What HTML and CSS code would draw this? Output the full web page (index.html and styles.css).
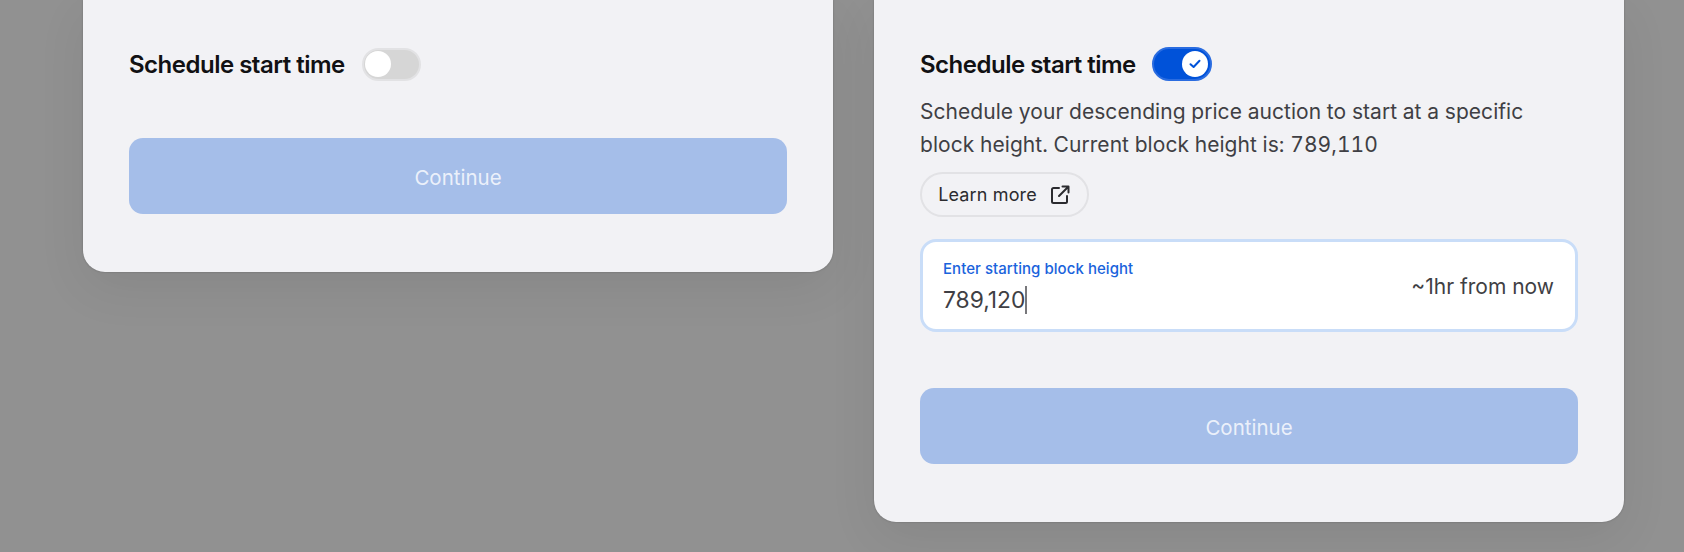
FILE: index.html
```html
<!DOCTYPE html>
<html lang="en">
<head>
    <meta charset="UTF-8">
    <meta name="viewport" content="width=device-width, initial-scale=1.0">
    <title>Schedule start time</title>
    <link rel="stylesheet" href="styles.css">
</head>
<body>
    <div class="stage">
        <!-- toggle off -->
        <div class="card card-off">
            <div class="schedule-row">
                <span class="schedule-title">Schedule start time</span>
                <span class="toggle"><span class="toggle-knob"></span></span>
            </div>
            <button class="continue-btn">Continue</button>
        </div>

        <!-- toggle on -->
        <div class="card card-on">
            <div class="schedule-row">
                <span class="schedule-title">Schedule start time</span>
                <span class="toggle toggle-on">
                    <span class="toggle-knob">
                        <svg width="12" height="10" viewBox="0 0 12 10" fill="none">
                            <path d="M1.5 5.2L4.6 8L10.5 1.8" stroke="#0052d9" stroke-width="2" stroke-linecap="round" stroke-linejoin="round"/>
                        </svg>
                    </span>
                </span>
            </div>
            <p class="schedule-text">Schedule your descending price auction to start at a specific block height. Current block height is: 789,110</p>
            <a class="learn-more">
                Learn more
                <svg width="22" height="22" viewBox="0 0 22 22" fill="none">
                    <path d="M10 4H4.5A1.5 1.5 0 0 0 3 5.500V17.500A1.500 1.500 0 0 0 4.500 19H16.500A1.500 1.500 0 0 0 18 17.500V12" stroke="#2b2b2f" stroke-width="2" stroke-linecap="round"/>
                    <path d="M13.500 2.500H19.500V8.500M19.500 2.500L10 12" stroke="#2b2b2f" stroke-width="2" stroke-linecap="round" stroke-linejoin="round"/>
                </svg>
            </a>
            <div class="block-input">
                <div class="block-input-left">
                    <div class="block-input-label">Enter starting block height</div>
                    <div class="block-input-value">789,120<span class="caret"></span></div>
                </div>
                <div class="block-input-hint">~1hr from now</div>
            </div>
            <button class="continue-btn">Continue</button>
        </div>
    </div>
</body>
</html>
```

FILE: styles.css
```css
body {
    margin: 0;
    background-color: #919191;
    font-family: 'Inter', sans-serif;
    overflow: hidden;
}

.stage {
    width: 1684px;
    height: 552px;
    display: flex;
    flex-direction: row;
    align-items: flex-start;
    gap: 41px;
    padding-left: 83px;
    box-sizing: border-box;
    overflow: hidden;
}

.card {
    box-sizing: border-box;
    width: 750px;
    background-color: #f2f2f5;
    border-radius: 0 0 22px 22px;
    padding: 47px 46px 58px 46px;
    box-shadow: 0 0 2px rgba(0, 0, 0, 0.25), 0 16px 50px rgba(0, 0, 0, 0.07);
}

.card-off .continue-btn {
    margin-top: 57px;
}

.card-on .continue-btn {
    margin-top: 56px;
}

.schedule-row {
    display: flex;
    flex-direction: row;
    align-items: center;
    gap: 17px;
    height: 34px;
}

.schedule-title {
    font-size: 24px;
    font-weight: 600;
    letter-spacing: -0.5px;
    color: #111113;
}

.toggle {
    box-sizing: border-box;
    width: 59px;
    height: 33px;
    border-radius: 17px;
    background-color: #d6d6d6;
    border: 2px solid #e2e2e4;
    display: flex;
    align-items: center;
    padding-left: 1px;
}

.toggle-knob {
    width: 26px;
    height: 26px;
    border-radius: 50%;
    background-color: #fff;
    display: flex;
    align-items: center;
    justify-content: center;
}

.toggle-on {
    width: 60px;
    height: 34px;
    margin-left: -1px;
    background-color: #0052d9;
    border-color: #2a6ce0;
    justify-content: flex-end;
    padding-left: 0;
    padding-right: 2px;
}

.schedule-text {
    margin: 14px 0 0 0;
    font-size: 21px;
    line-height: 33px;
    letter-spacing: 0.05px;
    color: #3f3f44;
    font-variant-numeric: tabular-nums;
}

.learn-more {
    box-sizing: border-box;
    width: 169px;
    height: 45px;
    margin-top: 11px;
    border: 2px solid #e2e2e5;
    border-radius: 23px;
    display: flex;
    align-items: center;
    justify-content: center;
    gap: 12px;
    font-size: 18px;
    font-weight: 400;
    letter-spacing: 0.15px;
    color: #2b2b2f;
}

.block-input {
    box-sizing: border-box;
    height: 93px;
    margin-top: 22px;
    background-color: #fff;
    border: 3px solid #c9ddf8;
    border-radius: 16px;
    padding: 3px 21px 0 20px;
    display: flex;
    flex-direction: row;
    align-items: center;
    justify-content: space-between;
}

.block-input-label {
    font-size: 15px;
    font-weight: 500;
    letter-spacing: 0.05px;
    color: #1a63dc;
}

.block-input-value {
    margin-top: 7px;
    font-size: 22.800px;
    line-height: 30px;
    color: #3f3f44;
    display: flex;
    align-items: center;
}

.caret {
    width: 2px;
    height: 28px;
    background-color: #77777b;
}

.block-input-hint {
    font-size: 21px;
    color: #3f3f44;
    margin-top: -2px;
}

.continue-btn {
    display: block;
    width: 100%;
    height: 76px;
    border: none;
    border-radius: 14px;
    background-color: #a5bee9;
    color: rgba(255, 255, 255, 0.8);
    font-family: 'Inter', sans-serif;
    font-size: 20.500px;
    padding-top: 3px;
}
```
